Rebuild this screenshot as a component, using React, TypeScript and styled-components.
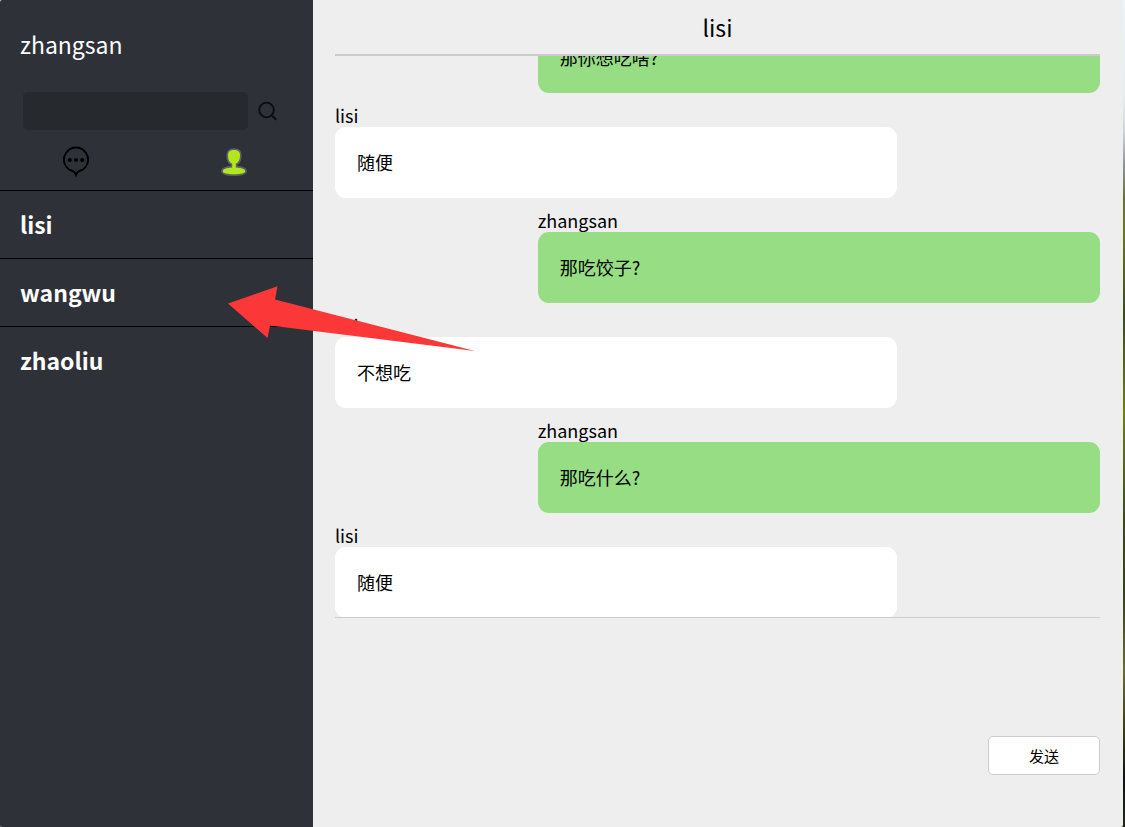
import React from "react";
import styled, { createGlobalStyle } from "styled-components";

const GlobalStyle = createGlobalStyle`
  * { box-sizing: border-box; }
  body {
    margin: 0;
    font-family: "Noto Sans CJK SC", "Noto Sans", sans-serif;
    color: #000;
  }
  button, input, textarea { font: inherit; color: inherit; }
`;

const Backdrop = styled.div`
  min-height: 100vh;
  display: flex;
  padding-right: 2px;
  background: linear-gradient(
    #e9f5fa 0%, #e4eeee 12%, #c9d3d8 16%, #8d9499 20%, #67702f 24%, #6b7a17 28%,
    #3c4a1a 38%, #6f7f10 50%, #36461a 64%, #35421a 72%, #6d6b2c 81%, #3a4012 88%,
    #10150f 94%, #1d2a12 100%
  );
`;

const Window = styled.div`
  position: relative;
  flex: 1;
  display: flex;
  height: 100vh;
  min-height: 480px;
  border-radius: 2px;
  overflow: hidden;
  background: #eee;
`;

const Sidebar = styled.aside`
  flex: 0 0 313px;
  display: flex;
  flex-direction: column;
  background: #2e3138;
  color: #fff;
`;

const UserName = styled.h1`
  margin: 0;
  padding: 26px 20px 30px;
  font-size: 23px;
  font-weight: 400;
  line-height: 36px;
`;

const SearchForm = styled.form`
  display: flex;
  align-items: center;
  gap: 9px;
  padding: 0 23px;
`;

const SearchInput = styled.input`
  width: 225px;
  height: 38px;
  padding: 0 12px;
  border: 0;
  border-radius: 5px;
  background: #26292e;
  font-size: 16px;
  outline: none;
`;

const IconButton = styled.button`
  display: flex;
  align-items: center;
  justify-content: center;
  padding: 0;
  border: 0;
  background: none;
  cursor: pointer;
`;

const Tabs = styled.nav`
  display: flex;
  justify-content: space-between;
  height: 60px;
  padding: 4px 65px 0 62px;
`;

const ContactList = styled.ul`
  margin: 0;
  padding: 0;
  list-style: none;
`;

const Contact = styled.li`
  border-top: 1px solid #000;
`;

const ContactLink = styled.a`
  display: block;
  padding: 15px 20px 16px;
  font-size: 23px;
  font-weight: 700;
  line-height: 36px;
  color: inherit;
  text-decoration: none;
`;

const Chat = styled.main`
  flex: 1;
  min-width: 0;
  display: flex;
  flex-direction: column;
  padding: 0 23px 0 22px;
`;

const ChatTitle = styled.h2`
  margin: 0;
  padding: 9px 0;
  border-bottom: 2px solid #ccc;
  font-size: 23px;
  font-weight: 400;
  line-height: 36px;
  text-align: center;
`;

const MessageArea = styled.section`
  flex: 1;
  min-height: 0;
  display: flex;
  flex-direction: column-reverse;
  overflow-y: auto;
  scrollbar-width: none;
`;

const MessageList = styled.div`
  display: flex;
  flex-direction: column;
  gap: 12px;
  margin-bottom: -1px;
`;

const Message = styled.article<{ $own: boolean }>`
  width: 73.5%;
  align-self: ${(p) => (p.$own ? "flex-end" : "flex-start")};
`;

const Sender = styled.div`
  font-size: 18px;
  line-height: 20px;
  padding-bottom: 2px;
`;

const Bubble = styled.p<{ $own: boolean }>`
  margin: 0;
  padding: 22px;
  border-radius: 11px;
  background: ${(p) => (p.$own ? "#96dd83" : "#fff")};
  font-size: 18px;
  line-height: 27px;
`;

const Composer = styled.form`
  flex: 0 0 210px;
  display: flex;
  flex-direction: column;
  padding-bottom: 52px;
  border-top: 1px solid #ccc;
`;

const Draft = styled.textarea`
  flex: 1;
  width: 100%;
  padding: 12px 22px;
  border: 0;
  background: transparent;
  font-size: 18px;
  resize: none;
  outline: none;
`;

const SendButton = styled.button`
  align-self: flex-end;
  width: 112px;
  height: 39px;
  padding: 0;
  border: 1px solid #ccc;
  border-radius: 5px;
  background: #fff;
  font-size: 15px;
  cursor: pointer;
`;

const Pointer = styled.svg`
  position: absolute;
  left: 228px;
  top: 286px;
  pointer-events: none;
`;

const contacts = ["lisi", "wangwu", "zhaoliu"];

const me = "zhangsan";

const messages = [
  { from: me, text: "那你想吃啥?" },
  { from: "lisi", text: "随便" },
  { from: me, text: "那吃饺子?" },
  { from: "lisi", text: "不想吃" },
  { from: me, text: "那吃什么?" },
  { from: "lisi", text: "随便" },
];

const SearchIcon = () => (
  <svg width="22" height="22" viewBox="0 0 22 22" fill="none" stroke="#0b0c0e">
    <circle cx="9.500" cy="10" r="7.3" strokeWidth="1.8" />
    <path d="M15.200 15.800 19.200 19.800" strokeWidth="2.2" />
  </svg>
);

const ChatIcon = () => (
  <svg width="28" height="32" viewBox="0 0 28 32">
    <path
      d="M11 25.200A12 12 0 1 1 17 25.200Q15.200 26 14 29Q12.800 26 11 25.200Z"
      fill="none"
      stroke="#000"
      strokeWidth="2"
    />
    <circle cx="7.8" cy="14" r="2.1" />
    <circle cx="14" cy="14" r="2.1" />
    <circle cx="20.2" cy="14" r="2.1" />
  </svg>
);

const personShape =
  "M14 3C18 3 20 4.600 20 8.500C20 12.800 18.600 15.600 15.800 16.800V20.500C21.500 20.800 25.200 22 25.200 24.200C25.200 26.300 20.500 27.200 14 27.200C7.500 27.200 2.800 26.300 2.800 24.200C2.800 22 6.500 20.800 12.200 20.500V16.800C9.400 15.600 8 12.800 8 8.500C8 4.600 10 3 14 3Z";

const PersonIcon = () => (
  <svg width="28" height="30" viewBox="0 0 28 30">
    <path d={personShape} fill="#5b6269" stroke="#5b6269" strokeWidth="3.4" strokeLinejoin="round" />
    <path d={personShape} fill="#b3e61d" />
  </svg>
);

export default function App() {
  return (
    <Backdrop>
      <GlobalStyle />
      <Window>
        <Sidebar>
          <UserName>{me}</UserName>
          <SearchForm>
            <SearchInput type="text" aria-label="搜索" />
            <IconButton type="button" aria-label="搜索">
              <SearchIcon />
            </IconButton>
          </SearchForm>
          <Tabs>
            <IconButton type="button" aria-label="聊天">
              <ChatIcon />
            </IconButton>
            <IconButton type="button" aria-label="联系人">
              <PersonIcon />
            </IconButton>
          </Tabs>
          <ContactList>
            {contacts.map((name) => (
              <Contact key={name}>
                <ContactLink href="#">{name}</ContactLink>
              </Contact>
            ))}
          </ContactList>
        </Sidebar>
        <Chat>
          <ChatTitle>lisi</ChatTitle>
          <MessageArea>
            <MessageList>
              {messages.map((m, i) => (
                <Message key={i} $own={m.from === me}>
                  <Sender>{m.from}</Sender>
                  <Bubble $own={m.from === me}>{m.text}</Bubble>
                </Message>
              ))}
            </MessageList>
          </MessageArea>
          <Composer>
            <Draft aria-label="消息" />
            <SendButton type="button">发送</SendButton>
          </Composer>
        </Chat>
        <Pointer width="248" height="66" viewBox="0 0 248 66" aria-hidden="true">
          <path d="M0 17.500 49.500 0.200 47 13.500 247 65 42 39.500 39.500 52Z" fill="#fc3737" />
        </Pointer>
      </Window>
    </Backdrop>
  );
}
